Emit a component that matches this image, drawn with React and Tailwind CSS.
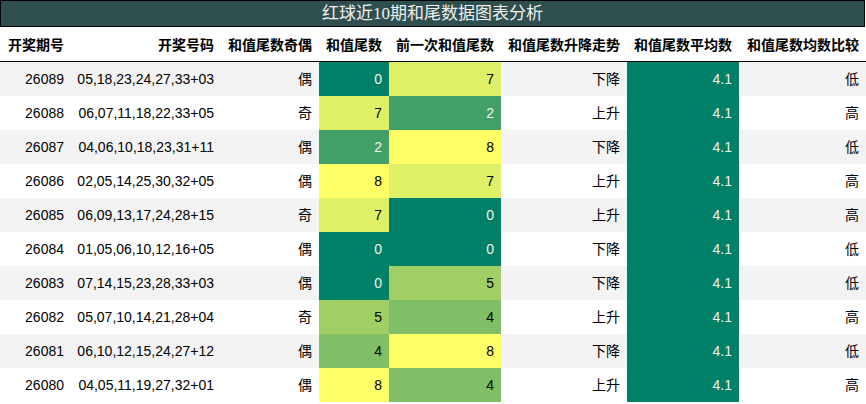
const rows = [
  ["26089", "05,18,23,24,27,33+03", "偶", 0, 7, "下降", "低"],
  ["26088", "06,07,11,18,22,33+05", "奇", 7, 2, "上升", "高"],
  ["26087", "04,06,10,18,23,31+11", "偶", 2, 8, "下降", "低"],
  ["26086", "02,05,14,25,30,32+05", "偶", 8, 7, "上升", "高"],
  ["26085", "06,09,13,17,24,28+15", "奇", 7, 0, "上升", "高"],
  ["26084", "01,05,06,10,12,16+05", "偶", 0, 0, "下降", "低"],
  ["26083", "07,14,15,23,28,33+03", "偶", 0, 5, "下降", "低"],
  ["26082", "05,07,10,14,21,28+04", "奇", 5, 4, "上升", "高"],
  ["26081", "06,10,12,15,24,27+12", "偶", 4, 8, "下降", "低"],
  ["26080", "04,05,11,19,27,32+01", "偶", 8, 4, "上升", "高"],
];

// summer colormap, 0..8
const shade = {
  0: "bg-[#008066] text-[#f1f1f1]",
  2: "bg-[#40a066] text-[#f1f1f1]",
  4: "bg-[#80bf66] text-black",
  5: "bg-[#a0cf66] text-black",
  7: "bg-[#dfef66] text-black",
  8: "bg-[#ffff66] text-black",
};

const headers = ["开奖期号", "开奖号码", "和值尾数奇偶", "和值尾数", "前一次和值尾数", "和值尾数升降走势", "和值尾数平均数", "和值尾数均数比较"];

const cols = "grid grid-cols-[71px_150px_98px_70px_112px_126px_112px_127px]";
const cell = "flex items-center justify-end pr-[7px]";

export default function App() {
  return (
    <div className="w-[866px] h-[404px] bg-white overflow-hidden font-['Liberation_Sans','Noto_Sans_CJK_SC',sans-serif] text-[14px] text-black">
      <div className="w-[865px] h-[27px] bg-[#2f4f4f] border border-black flex items-center justify-center text-[17px] text-[#f0f0f0] font-['Liberation_Serif','Noto_Sans_CJK_SC',serif]">
        红球近10期和尾数据图表分析
      </div>
      <div className={`${cols} h-[35px] border-b border-black font-bold font-['Noto_Sans_CJK_SC',sans-serif]`}>
        {headers.map((h) => (
          <div key={h} className={cell}>{h}</div>
        ))}
      </div>
      {rows.map((r, i) => (
        <div key={r[0]} className={`${cols} h-[34px] ${i % 2 === 0 ? "bg-[#f3f3f3]" : "bg-white"}`}>
          <div className={cell}>{r[0]}</div>
          <div className={cell}>{r[1]}</div>
          <div className={cell}>{r[2]}</div>
          <div className={`${cell} ${shade[r[3]]}`}>{r[3]}</div>
          <div className={`${cell} ${shade[r[4]]}`}>{r[4]}</div>
          <div className={cell}>{r[5]}</div>
          <div className={`${cell} bg-[#008066] text-[#f1f1f1]`}>4.1</div>
          <div className={cell}>{r[6]}</div>
        </div>
      ))}
    </div>
  );
}
